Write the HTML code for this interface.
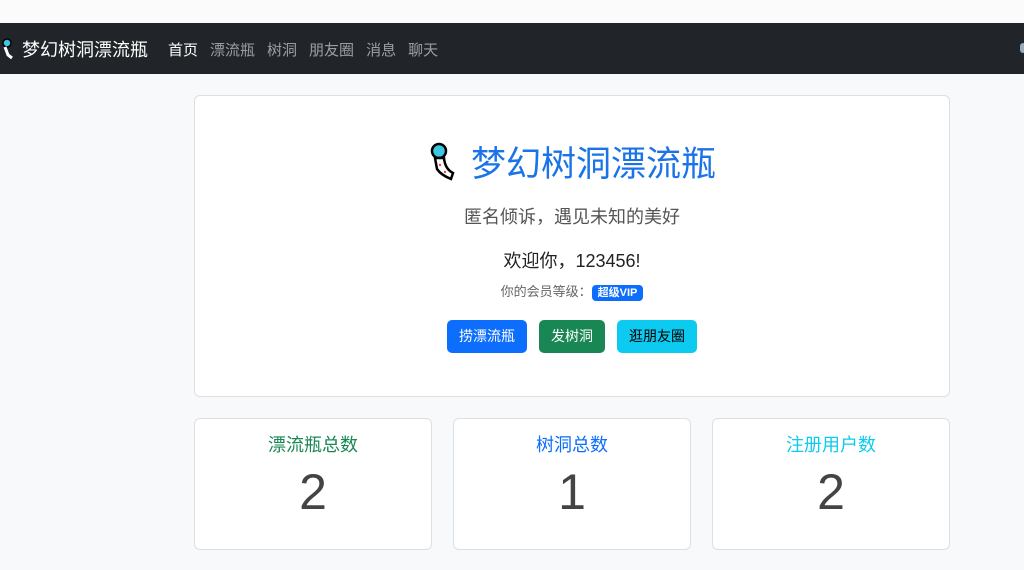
<!DOCTYPE html>
<html><head><meta charset="utf-8"><style>
body{margin:0;width:1024px;height:570px;overflow:hidden;background:#f8f9fa;font-family:"Liberation Sans","Noto Sans CJK SC",sans-serif;}
.top{height:23px;background:#fbfbfc;}
.nav{position:absolute;top:23px;left:0;width:1024px;height:51px;background:#212529;}
.brand{position:absolute;left:22px;top:13px;color:#fff;font-size:18px;}
.links{position:absolute;left:168px;top:16px;font-size:15px;color:rgba(255,255,255,.55);}
.links span{margin-right:12px;}
.links span.a{color:#fff;}
.card{position:absolute;background:#fff;border:1px solid #dcdfe3;border-radius:6px;}
.c{text-align:center;}
.btn{display:inline-block;border-radius:5px;font-size:14px;padding:0 12px;height:33px;line-height:33px;margin:0 6px;}
.num{font-size:50px;color:#444;margin-top:6px}
</style></head><body>
<div class="top"></div>
<div class="nav">
<svg style="position:absolute;left:0;top:15px" width="16" height="22" viewBox="0 0 16 22"><circle cx="7" cy="5" r="4" fill="#3cc6e0" stroke="#000" stroke-width="1.5"/><path d="M5 9 L8 17 L12 20" stroke="#fff" stroke-width="3" fill="none"/></svg>
<div class="brand">梦幻树洞漂流瓶</div>
<div class="links"><span class="a">首页</span><span>漂流瓶</span><span>树洞</span><span>朋友圈</span><span>消息</span><span>聊天</span></div>
<div style="position:absolute;left:1020px;top:20px;width:6px;height:10px;background:#9ab;border-radius:3px"></div>
</div>
<div class="card c" style="left:194px;top:95px;width:754px;height:300px;">
<div style="position:absolute;left:232px;top:45px;">
<svg width="30" height="40" viewBox="0 0 30 40"><circle cx="12" cy="10" r="7" fill="#3cc6e0" stroke="#000" stroke-width="2.5"/><path d="M8 17 L10 28 Q14 34 24 38 L26 32 Q18 28 17 17 Z" fill="#fff" stroke="#000" stroke-width="2.5"/><circle cx="13" cy="24" r="1.2" fill="#e44"/><circle cx="18" cy="31" r="1.2" fill="#e44"/></svg></div>
<div style="position:absolute;left:276px;top:40px;font-size:35px;color:#1a73e8;">梦幻树洞漂流瓶</div>
<div style="position:absolute;left:0;width:754px;top:107px;font-size:18px;color:#555;">匿名倾诉，遇见未知的美好</div>
<div style="position:absolute;left:0;width:754px;top:151px;font-size:18px;color:#222;">欢迎你，123456!</div>
<div style="position:absolute;left:0;width:754px;top:185px;font-size:13px;color:#666;">你的会员等级：<span style="background:#0d6efd;color:#fff;font-size:11px;font-weight:bold;padding:2px 6px;border-radius:4px;">超级VIP</span></div>
<div style="position:absolute;left:0;width:754px;top:224px;">
<span class="btn" style="background:#0d6efd;color:#fff">捞漂流瓶</span><span class="btn" style="background:#198754;color:#fff">发树洞</span><span class="btn" style="background:#0dcaf0;color:#000">逛朋友圈</span></div>
</div>
<div class="card c" style="left:194px;top:418px;width:236px;height:130px;"><div style="margin-top:12px;font-size:18px;color:#198754">漂流瓶总数</div><div class="num">2</div></div>
<div class="card c" style="left:453px;top:418px;width:236px;height:130px;"><div style="margin-top:12px;font-size:18px;color:#0d6efd">树洞总数</div><div class="num">1</div></div>
<div class="card c" style="left:712px;top:418px;width:236px;height:130px;"><div style="margin-top:12px;font-size:18px;color:#0dcaf0">注册用户数</div><div class="num">2</div></div>
</body></html>
